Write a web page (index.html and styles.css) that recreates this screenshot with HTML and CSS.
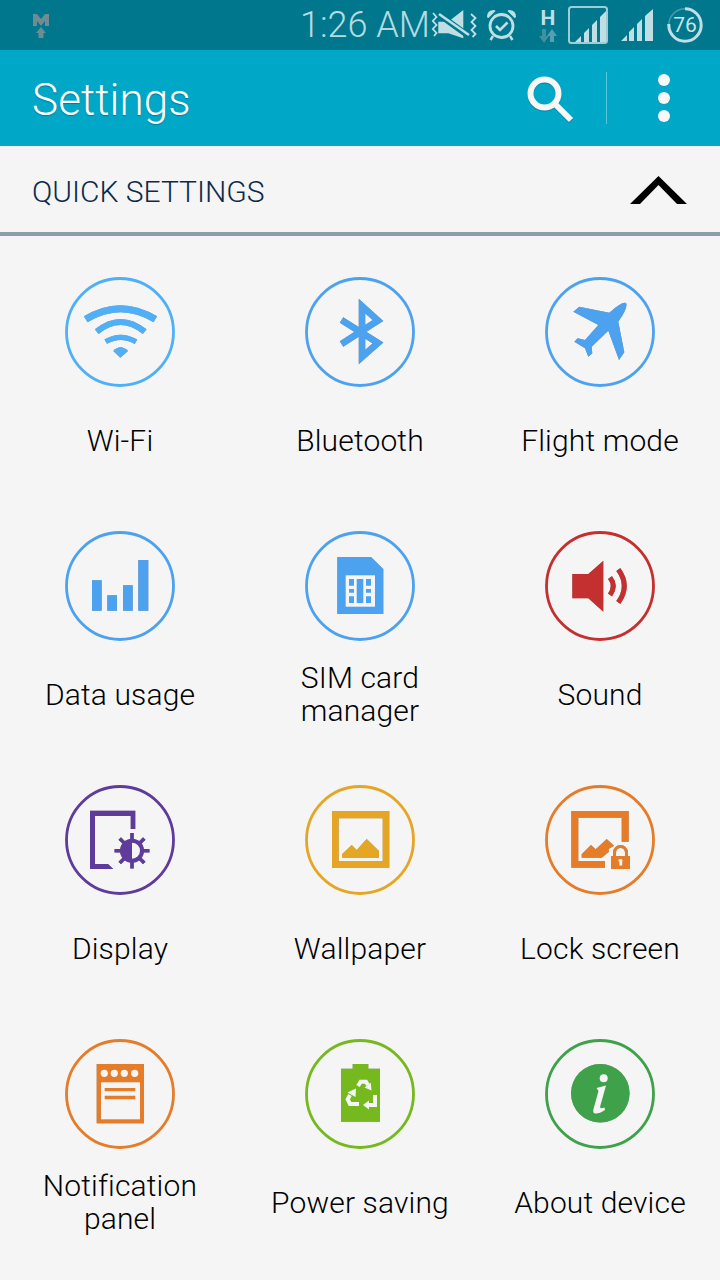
FILE: index.html
```html
<!DOCTYPE html>
<html lang="en">
<head>
    <meta charset="UTF-8">
    <meta name="viewport" content="width=device-width, initial-scale=1.0">
    <title>Settings</title>
    <link rel="stylesheet" href="styles.css">
</head>
<body>
    <div class="phone">
        <!-- Status bar -->
        <div class="status-bar">
            <svg class="st-upload" width="16" height="24" viewBox="0 0 16 24">
                <path class="st-dim" d="M0 0H4L8 5L12 0H16V12H12V7L8 12L4 7V12H0Z"/>
                <path class="st-dim" d="M8 13L13 19H10.500V24H5.500V19H3Z"/>
            </svg>
            <div class="status-right">
                <span class="clock">1:26 AM</span>
                <svg class="st-mute" width="47" height="30" viewBox="0 0 47 30">
                    <path class="st-fill" d="M8.300 11.700H18.300L33.300 0V28.300L18.300 23.300H8.300Z"/>
                    <path class="st-gap" d="M7 3L40 27"/>
                    <path class="st-line" d="M9 4L39 25" stroke-width="2.600"/>
                    <path class="st-line" d="M3 3L6.500 7L2.800 11L6.500 15L2.800 19L6.500 23L4 26" stroke-width="1.800"/>
                    <path class="st-line" d="M41 4L45.500 8L41.500 12L45.500 16L41.500 20L45.500 24L42.500 27" stroke-width="1.800"/>
                </svg>
                <svg class="st-alarm" width="31" height="32" viewBox="0 0 31 32">
                    <circle class="st-line" cx="15.500" cy="17" r="11.500" stroke-width="2.800"/>
                    <path class="st-fill" d="M1 8Q1 1 8 1Q9 1 9.500 2L2.500 9Q1.500 9 1 8Z"/>
                    <path class="st-fill" d="M30 8Q30 1 23 1Q22 1 21.500 2L28.500 9Q29.500 9 30 8Z"/>
                    <path class="st-line" d="M10 17L14 21L21.500 13.500" stroke-width="2.600"/>
                    <path class="st-line" d="M7 27L4.500 31M24 27L26.500 31" stroke-width="2.400"/>
                </svg>
                <div class="st-network">
                    <span class="st-h">H</span>
                    <svg width="18" height="14" viewBox="0 0 18 14">
                        <path class="st-dark" d="M3 0H7V7H10L5 14L0 7H3Z"/>
                        <path class="st-mid" d="M13 0L18 7H15V13H11V7H8Z"/>
                    </svg>
                </div>
                <svg class="st-sim" width="40" height="38" viewBox="0 0 40 38">
                    <rect class="st-box" x="1" y="1" width="38" height="36" rx="2.500"/>
                    <path class="st-fill" d="M7 36L13 30V36ZM16 36V27L21 22V36ZM24 36V19L29 14V36ZM32 36V11L38 5V36Z"/>
                </svg>
                <svg class="st-signal" width="32" height="32" viewBox="0 0 32 32">
                    <path class="st-fill" d="M0 32L6 26V32ZM8 32V23L13 18V32ZM16 32V15L21 10V32ZM24 32V7L32 0V32Z"/>
                </svg>
                <svg class="st-battery" width="36" height="36" viewBox="0 0 36 36">
                    <circle class="st-track" cx="18" cy="18" r="16.200"/>
                    <circle class="st-level" cx="18" cy="18" r="16.200" pathLength="100" stroke-dasharray="76 24" transform="rotate(-90 18 18)"/>
                    <text class="st-percent" x="18" y="25">76</text>
                </svg>
            </div>
        </div>

        <!-- Action bar -->
        <div class="action-bar">
            <h1 class="title">Settings</h1>
            <svg class="search" width="48" height="48" viewBox="0 0 48 48">
                <circle class="search-lens" cx="18.500" cy="18.500" r="14"/>
                <path class="search-handle" d="M28.500 28.500L45 45"/>
            </svg>
            <span class="divider"></span>
            <div class="overflow">
                <span class="dot"></span>
                <span class="dot"></span>
                <span class="dot"></span>
            </div>
        </div>

        <!-- Section header -->
        <div class="section-head">
            <span class="section-title">QUICK SETTINGS</span>
            <svg width="58" height="30" viewBox="0 0 58 30">
                <path d="M0 29L28.500 1L57 29H47L28.500 10L10 29Z"/>
            </svg>
        </div>

        <!-- Grid of settings -->
        <div class="tiles">
            <a class="tile sky">
                <svg class="tile-icon" width="110" height="110" viewBox="0 0 110 110">
                    <circle class="ring" cx="55" cy="55" r="53.500"/>
                    <g class="glyph">
                        <path class="line" stroke-width="7" d="M20.700 42.300Q55.500 21.100 90.300 42.300"/>
                        <path class="line" stroke-width="6" d="M31.700 54.700Q55.500 35.300 79.700 54.700"/>
                        <path class="line" stroke-width="5" d="M40.700 64.700Q55.500 56 71 64.700"/>
                        <path class="solid" d="M48.300 74Q55.500 66.500 63 74L55.300 80.700Z"/>
                    </g>
                </svg>
                <span class="tile-label">Wi-Fi</span>
            </a>
            <a class="tile blue">
                <svg class="tile-icon" width="110" height="110" viewBox="0 0 110 110">
                    <circle class="ring" cx="55" cy="55" r="53.500"/>
                    <g class="glyph">
                        <path class="line" stroke-width="6.500" d="M36.500 43L73 66L57 80V29L73 43.500L36.500 67"/>
                    </g>
                </svg>
                <span class="tile-label">Bluetooth</span>
            </a>
            <a class="tile blue">
                <svg class="tile-icon" width="110" height="110" viewBox="0 0 110 110">
                    <circle class="ring" cx="55" cy="55" r="53.500"/>
                    <g class="glyph">
                        <path class="solid" d="M81 26Q83.500 30 73.300 44.700L79.300 75.300L74 83L63.300 53.700L46.700 69.700L47.300 76.300L43.300 79.700L40 71.300L29.300 64.700L32.700 61.300L40 63L53.300 48L28.300 34.700L34.300 29.700L64.300 35.700Q77 24.500 81 26Z"/>
                    </g>
                </svg>
                <span class="tile-label">Flight mode</span>
            </a>
            <a class="tile blue">
                <svg class="tile-icon" width="110" height="110" viewBox="0 0 110 110">
                    <circle class="ring" cx="55" cy="55" r="53.500"/>
                    <g class="glyph">
                        <path class="solid" d="M27 49.300H36.700V79.700H27ZM42.300 64.300H52V79.700H42.300ZM58 54.300H67.700V79.700H58ZM73.300 29H83.300V79.700H73.300Z"/>
                    </g>
                </svg>
                <span class="tile-label">Data usage</span>
            </a>
            <a class="tile blue">
                <svg class="tile-icon" width="110" height="110" viewBox="0 0 110 110">
                    <circle class="ring" cx="55" cy="55" r="53.500"/>
                    <g class="glyph">
                        <path class="solid" d="M32.300 26H66L78.300 38V83H32.300Z"/>
                    </g>
                    <rect class="hole" x="40.700" y="44.300" width="29.300" height="31.400"/>
                    <path class="solid" d="M44 48H49V54.700H44ZM51.700 48H58.300V72H51.700ZM61 48H66V54.700H61ZM44 58H49V61.700H44ZM61 58H66V61.700H61ZM44 65.300H49V72H44ZM61 65.300H66V72H61Z"/>
                </svg>
                <span class="tile-label">SIM card manager</span>
            </a>
            <a class="tile red">
                <svg class="tile-icon" width="110" height="110" viewBox="0 0 110 110">
                    <circle class="ring" cx="55" cy="55" r="53.500"/>
                    <g class="glyph">
                        <path class="solid" d="M27.300 43H43.300L58.300 29.700V80.700L43.300 67.300H27.300Z"/>
                        <path class="line" stroke-width="5" d="M65 46.500Q71.600 55 65 64"/>
                        <path class="line" stroke-width="5" d="M73.300 38.500Q85.300 55 73.300 71.500"/>
                    </g>
                </svg>
                <span class="tile-label">Sound</span>
            </a>
            <a class="tile purple">
                <svg class="tile-icon" width="110" height="110" viewBox="0 0 110 110">
                    <circle class="ring" cx="55" cy="55" r="53.500"/>
                    <g class="glyph">
                        <path class="solid" d="M25 25.700H70.300V44H65.700V31H30V79H43L48.300 84H25Z"/>
                        <path class="line" stroke-width="3.600" d="M67 48V83.500M49.500 65.700H84.500M54.700 53.400L79.300 78M54.700 78L79.300 53.400"/>
                        <circle class="solid" cx="67" cy="65.700" r="12"/>
                    </g>
                    <path class="hole" d="M67 57.700A8 8 0 0 1 67 73.700Z"/>
                </svg>
                <span class="tile-label">Display</span>
            </a>
            <a class="tile amber">
                <svg class="tile-icon" width="110" height="110" viewBox="0 0 110 110">
                    <circle class="ring" cx="55" cy="55" r="53.500"/>
                    <g class="glyph">
                        <path class="solid" fill-rule="evenodd" d="M27 26H84.300V82.700H27ZM33.700 33.300V76H77.700V33.300Z"/>
                        <path class="solid" d="M37 72.700V69.300L46.700 60L51.700 65L61.700 54L74 66V72.700Z"/>
                    </g>
                </svg>
                <span class="tile-label">Wallpaper</span>
            </a>
            <a class="tile orange">
                <svg class="tile-icon" width="110" height="110" viewBox="0 0 110 110">
                    <circle class="ring" cx="55" cy="55" r="53.500"/>
                    <g class="glyph">
                        <path class="solid" d="M26.300 26H83.700V56.700H76.700V32.700H33.300V76H60V82.700H26.300Z"/>
                        <path class="solid" d="M36.700 72.700V69.300L46 60L50.700 64.300L61.700 54L69 60.700L63.700 64V67L56.700 72.700Z"/>
                        <path class="line" stroke-width="3" d="M69.500 71V67.500A6 6 0 0 1 81.500 67.500V71"/>
                        <rect class="solid" x="66" y="71" width="19" height="13"/>
                    </g>
                    <path class="hole" d="M73.400 76A2 2 0 1 1 77.200 76.800V80.500H74.400V76.800Z"/>
                </svg>
                <span class="tile-label">Lock screen</span>
            </a>
            <a class="tile orange">
                <svg class="tile-icon" width="110" height="110" viewBox="0 0 110 110">
                    <circle class="ring" cx="55" cy="55" r="53.500"/>
                    <g class="glyph">
                        <rect class="solid" x="31.700" y="25" width="47.300" height="59.300"/>
                    </g>
                    <rect class="hole" x="36" y="43.300" width="39" height="37"/>
                    <circle class="hole" cx="39.300" cy="34.300" r="3.600"/>
                    <circle class="hole" cx="49.300" cy="34.300" r="3.600"/>
                    <circle class="hole" cx="59.300" cy="34.300" r="3.600"/>
                    <circle class="hole" cx="69.700" cy="34.300" r="3.600"/>
                    <path class="solid" d="M39.700 49H70.300V52.300H39.700ZM39.700 56.700H70.300V60.300H39.700Z"/>
                </svg>
                <span class="tile-label">Notification panel</span>
            </a>
            <a class="tile lime">
                <svg class="tile-icon" width="110" height="110" viewBox="0 0 110 110">
                    <circle class="ring" cx="55" cy="55" r="53.500"/>
                    <g class="glyph">
                        <path class="solid" d="M47.700 25H63.300V29.700H75V82.700H36V29.700H47.700Z"/>
                    </g>
                    <path class="recycle" d="M53 47L55.700 42.700H61L63 46"/>
                    <path class="recycle-head" d="M65.800 43.800L66.500 51.500L59.500 48.500Z"/>
                    <path class="recycle" d="M54 65H45L42.700 60.300L45 56"/>
                    <path class="recycle-head" d="M42.500 53.500L51 49.500L50.500 58Z"/>
                    <path class="recycle" d="M70 56V66H63"/>
                    <path class="recycle-head" d="M64 61.500V70.500L58 66Z"/>
                </svg>
                <span class="tile-label">Power saving</span>
            </a>
            <a class="tile green">
                <svg class="tile-icon" width="110" height="110" viewBox="0 0 110 110">
                    <circle class="ring" cx="55" cy="55" r="53.500"/>
                    <g class="glyph">
                        <circle class="solid" cx="55.300" cy="54.300" r="29.300"/>
                    </g>
                    <circle class="hole" cx="58.700" cy="39.300" r="4"/>
                    <path class="hole" d="M51.500 49L61 46.500L55 68Q55 70 59.500 68.500L60 71Q54 75 50 74.500Q47.500 74 48.500 70L53.500 52Z"/>
                </svg>
                <span class="tile-label">About device</span>
            </a>
        </div>
    </div>
</body>
</html>
```

FILE: styles.css
```css
html, body {
    margin: 0;
    padding: 0;
}

body {
    background-color: #f5f5f5;
    font-family: Roboto, "Liberation Sans", sans-serif;
}

.phone {
    width: 720px;
    height: 1280px;
    overflow: hidden;
    background-color: #f5f5f5;
}

/* Status bar */
.status-bar {
    display: flex;
    align-items: center;
    justify-content: space-between;
    height: 50px;
    padding: 0 17px 0 33px;
    background-color: #00778c;
}

.st-upload {
    margin-top: 2px;
}

.st-dim {
    fill: #6f8c93;
}

.status-right {
    display: flex;
    align-items: center;
    height: 50px;
}

.clock {
    width: 130px;
    margin-left: -2px;
    font-size: 36px;
    font-weight: 300;
    white-space: nowrap;
    color: #b5dbe2;
}

.st-fill {
    fill: #c0dfe5;
}

.st-line {
    fill: none;
    stroke: #c0dfe5;
}

.st-gap {
    fill: none;
    stroke: #00778c;
    stroke-width: 6;
}

.st-dark {
    fill: #3f919f;
}

.st-mid {
    fill: #569fad;
}

.st-alarm {
    margin-left: 9px;
}

.st-network {
    display: flex;
    flex-direction: column;
    align-items: center;
    width: 18px;
    margin-left: 22px;
}

.st-h {
    height: 20px;
    font-size: 21px;
    font-weight: 700;
    line-height: 20px;
    color: #c0dfe5;
}

.st-network svg {
    margin-top: 1px;
}

.st-sim {
    margin-left: 11px;
}

.st-box {
    fill: none;
    stroke: #9fcdd6;
    stroke-width: 2;
}

.st-signal {
    margin-left: 13px;
}

.st-battery {
    margin-left: 14px;
}

.st-track {
    fill: none;
    stroke: #4c9bab;
    stroke-width: 1.500;
}

.st-level {
    fill: none;
    stroke: #c0dfe5;
    stroke-width: 3;
}

.st-percent {
    font-family: Roboto, sans-serif;
    font-size: 21px;
    text-anchor: middle;
    fill: #c9e4e9;
}

/* Action bar */
.action-bar {
    display: flex;
    align-items: center;
    height: 96px;
    padding-left: 32px;
    background-color: #00a7c7;
}

.title {
    flex: 1;
    margin: 0;
    padding-top: 4px;
    font-size: 44px;
    font-weight: 300;
    letter-spacing: 0.1px;
    color: #ffffff;
    text-shadow: 0 1px 1px rgba(0, 0, 0, 0.25);
}

.search {
    margin: 2px 32px 0 1px;
    filter: drop-shadow(0.5px 1px 0 rgba(0, 0, 0, 0.2));
}

.search-lens {
    fill: none;
    stroke: #f7f7f7;
    stroke-width: 6;
}

.search-handle {
    fill: none;
    stroke: #f7f7f7;
    stroke-width: 6;
}

.divider {
    width: 1px;
    height: 52px;
    background-color: rgba(255, 255, 255, 0.35);
}

.overflow {
    display: flex;
    flex-direction: column;
    gap: 6px;
    margin: 0 50px 0 51px;
}

.dot {
    width: 12px;
    height: 12px;
    border-radius: 50%;
    background-color: #f7f7f7;
}

/* Section header */
.section-head {
    display: flex;
    align-items: center;
    justify-content: space-between;
    height: 86px;
    padding: 0 32px 0 32px;
    border-bottom: 4px solid #8a9fab;
}

.section-title {
    padding-top: 5px;
    font-size: 30px;
    font-weight: 300;
    color: #0e2a47;
}

.section-head svg {
    margin-top: 1px;
    fill: #000000;
}

/* Grid */
.tiles {
    display: grid;
    grid-template-columns: repeat(3, 240px);
    grid-auto-rows: 254px;
}

.tile {
    display: flex;
    flex-direction: column;
    align-items: center;
    padding-top: 41px;
}

.tile-icon {
    flex: none;
}

.tile-label {
    display: flex;
    align-items: center;
    justify-content: center;
    width: 190px;
    height: 66px;
    margin-top: 20px;
    font-size: 30px;
    font-weight: 300;
    letter-spacing: 0.15px;
    line-height: 33px;
    text-align: center;
    color: #000000;
}

.sky { color: #4fb0f8; }
.blue { color: #4da2ef; }
.red { color: #c4302f; }
.purple { color: #5f3b9c; }
.amber { color: #e6a625; }
.orange { color: #e57c2a; }
.lime { color: #76b91e; }
.green { color: #3fa149; }

.ring {
    fill: none;
    stroke: currentColor;
    stroke-width: 2.800;
}

.glyph {
    filter: drop-shadow(0.8px 0.8px 0 rgba(0, 0, 0, 0.4));
}

.solid {
    fill: currentColor;
}

.line {
    fill: none;
    stroke: currentColor;
}

.hole {
    fill: #f5f5f5;
}

.recycle {
    fill: none;
    stroke: #f5f5f5;
    stroke-width: 4;
}

.recycle-head {
    fill: #f5f5f5;
}
```
